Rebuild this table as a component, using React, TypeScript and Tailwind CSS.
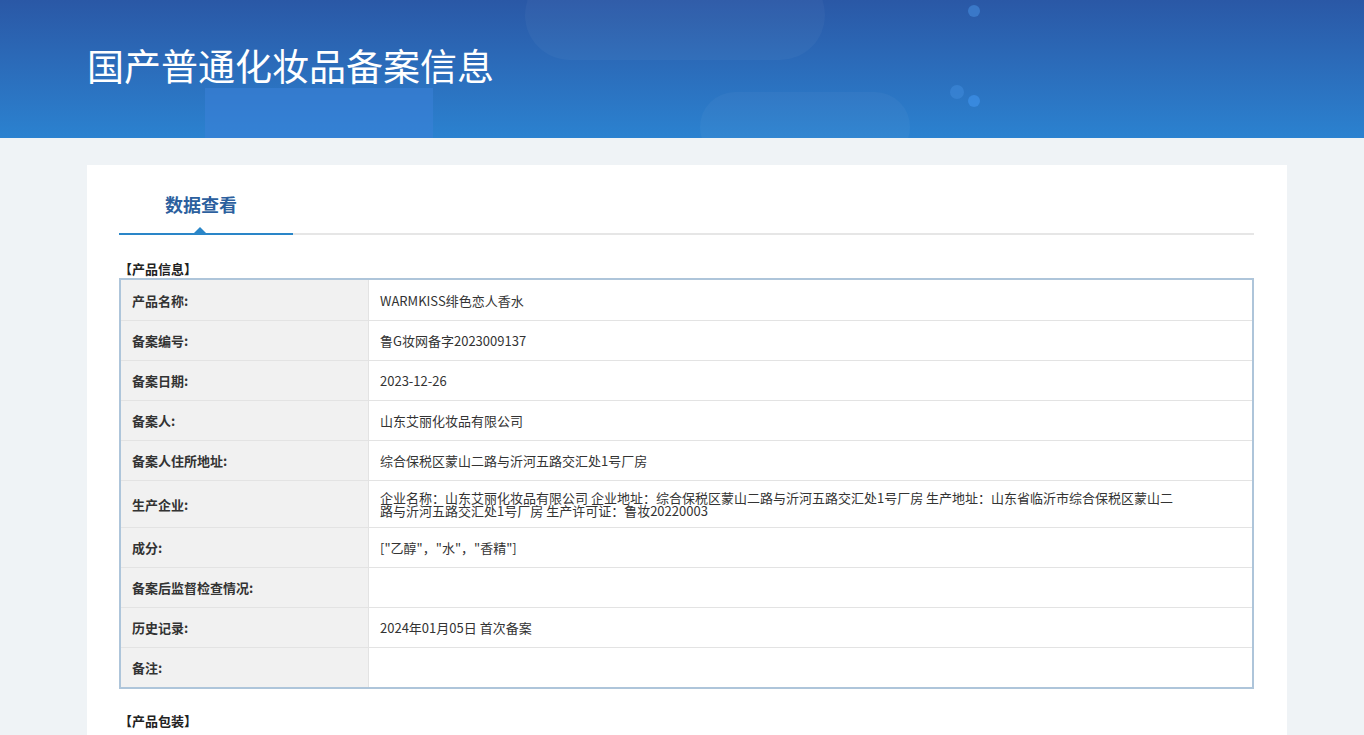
import React from 'react'

const rows: { label: string; value: string; tall?: boolean }[] = [
  { label: '产品名称:', value: 'WARMKISS绯色恋人香水' },
  { label: '备案编号:', value: '鲁G妆网备字2023009137' },
  { label: '备案日期:', value: '2023-12-26' },
  { label: '备案人:', value: '山东艾丽化妆品有限公司' },
  { label: '备案人住所地址:', value: '综合保税区蒙山二路与沂河五路交汇处1号厂房' },
  {
    label: '生产企业:',
    value:
      '企业名称：山东艾丽化妆品有限公司 企业地址：综合保税区蒙山二路与沂河五路交汇处1号厂房 生产地址：山东省临沂市综合保税区蒙山二路与沂河五路交汇处1号厂房 生产许可证：鲁妆20220003',
    tall: true,
  },
  { label: '成分:', value: '["乙醇"，"水"，"香精"]' },
  { label: '备案后监督检查情况:', value: '' },
  { label: '历史记录:', value: '2024年01月05日 首次备案' },
  { label: '备注:', value: '' },
]

const font = { fontFamily: '"Microsoft YaHei", "Noto Sans CJK SC", "Noto Sans", sans-serif' }

function BannerArt() {
  return (
    <svg className="absolute inset-0 h-full w-full" viewBox="0 0 1364 138" preserveAspectRatio="none">
      <rect x="205" y="88" width="228" height="50" fill="#3d82d8" opacity="0.55" />
      <rect x="525" y="-30" width="300" height="90" rx="45" fill="#ffffff" opacity="0.035" />
      <rect x="700" y="92" width="210" height="70" rx="35" fill="#ffffff" opacity="0.035" />
      <circle cx="974" cy="11" r="6" fill="#3f7fd0" opacity="0.8" />
      <circle cx="957" cy="92" r="7" fill="#3c86d6" opacity="0.7" />
      <circle cx="974" cy="101" r="6" fill="#3a8be0" opacity="0.9" />
    </svg>
  )
}

export default function App() {
  return (
    <div className="min-h-screen bg-[#eff3f6]" style={font}>
      {/* Banner */}
      <div className="relative h-[138px] overflow-hidden bg-gradient-to-b from-[#2a58a6] to-[#2b82d0]">
        <BannerArt />
        <h1 className="relative pl-[87px] pt-[39px] text-[37px] leading-[52px] text-white">
          国产普通化妆品备案信息
        </h1>
      </div>

      {/* Card */}
      <div className="ml-[87px] mt-[27px] w-[1200px] bg-white pb-6 pl-[32px] pr-[33px]">
        <div className="flex h-[70px] items-end border-b-2 border-[#e6e6e6]">
          <div className="relative -mb-[2px] w-[174px] border-b-2 border-[#2a86c8] pb-[16px] pl-[46px]">
            <span className="text-[18px] font-bold leading-[24px] text-[#2c5f9e]">数据查看</span>
            <span className="absolute bottom-0 left-[75px] h-0 w-0 border-x-[6px] border-b-[6px] border-x-transparent border-b-[#2a86c8]" />
          </div>
        </div>

        <div className="mt-[25px] text-[13px] font-bold leading-[18px] text-[#222]">【产品信息】</div>
        <div className="border-2 border-[#aec5da]">
          {rows.map((r, i) => (
            <div
              key={i}
              className={`flex text-[13px] leading-[13px] ${i > 0 ? 'border-t border-[#e3e3e3]' : ''} ${r.tall ? 'h-[47px]' : 'h-[40px]'}`}
            >
              <div className="flex w-[248px] shrink-0 items-center border-r border-[#e3e3e3] bg-[#f1f1f1] pl-[11px] font-bold text-[#333]">
                {r.label}
              </div>
              <div className="flex items-center pl-[11px] text-[#333]">
                <span className={r.tall ? 'block w-[800px] leading-[13px]' : ''}>{r.value}</span>
              </div>
            </div>
          ))}
        </div>

        <div className="mt-[23px] text-[13px] font-bold leading-[18px] text-[#222]">【产品包装】</div>
      </div>
    </div>
  )
}
